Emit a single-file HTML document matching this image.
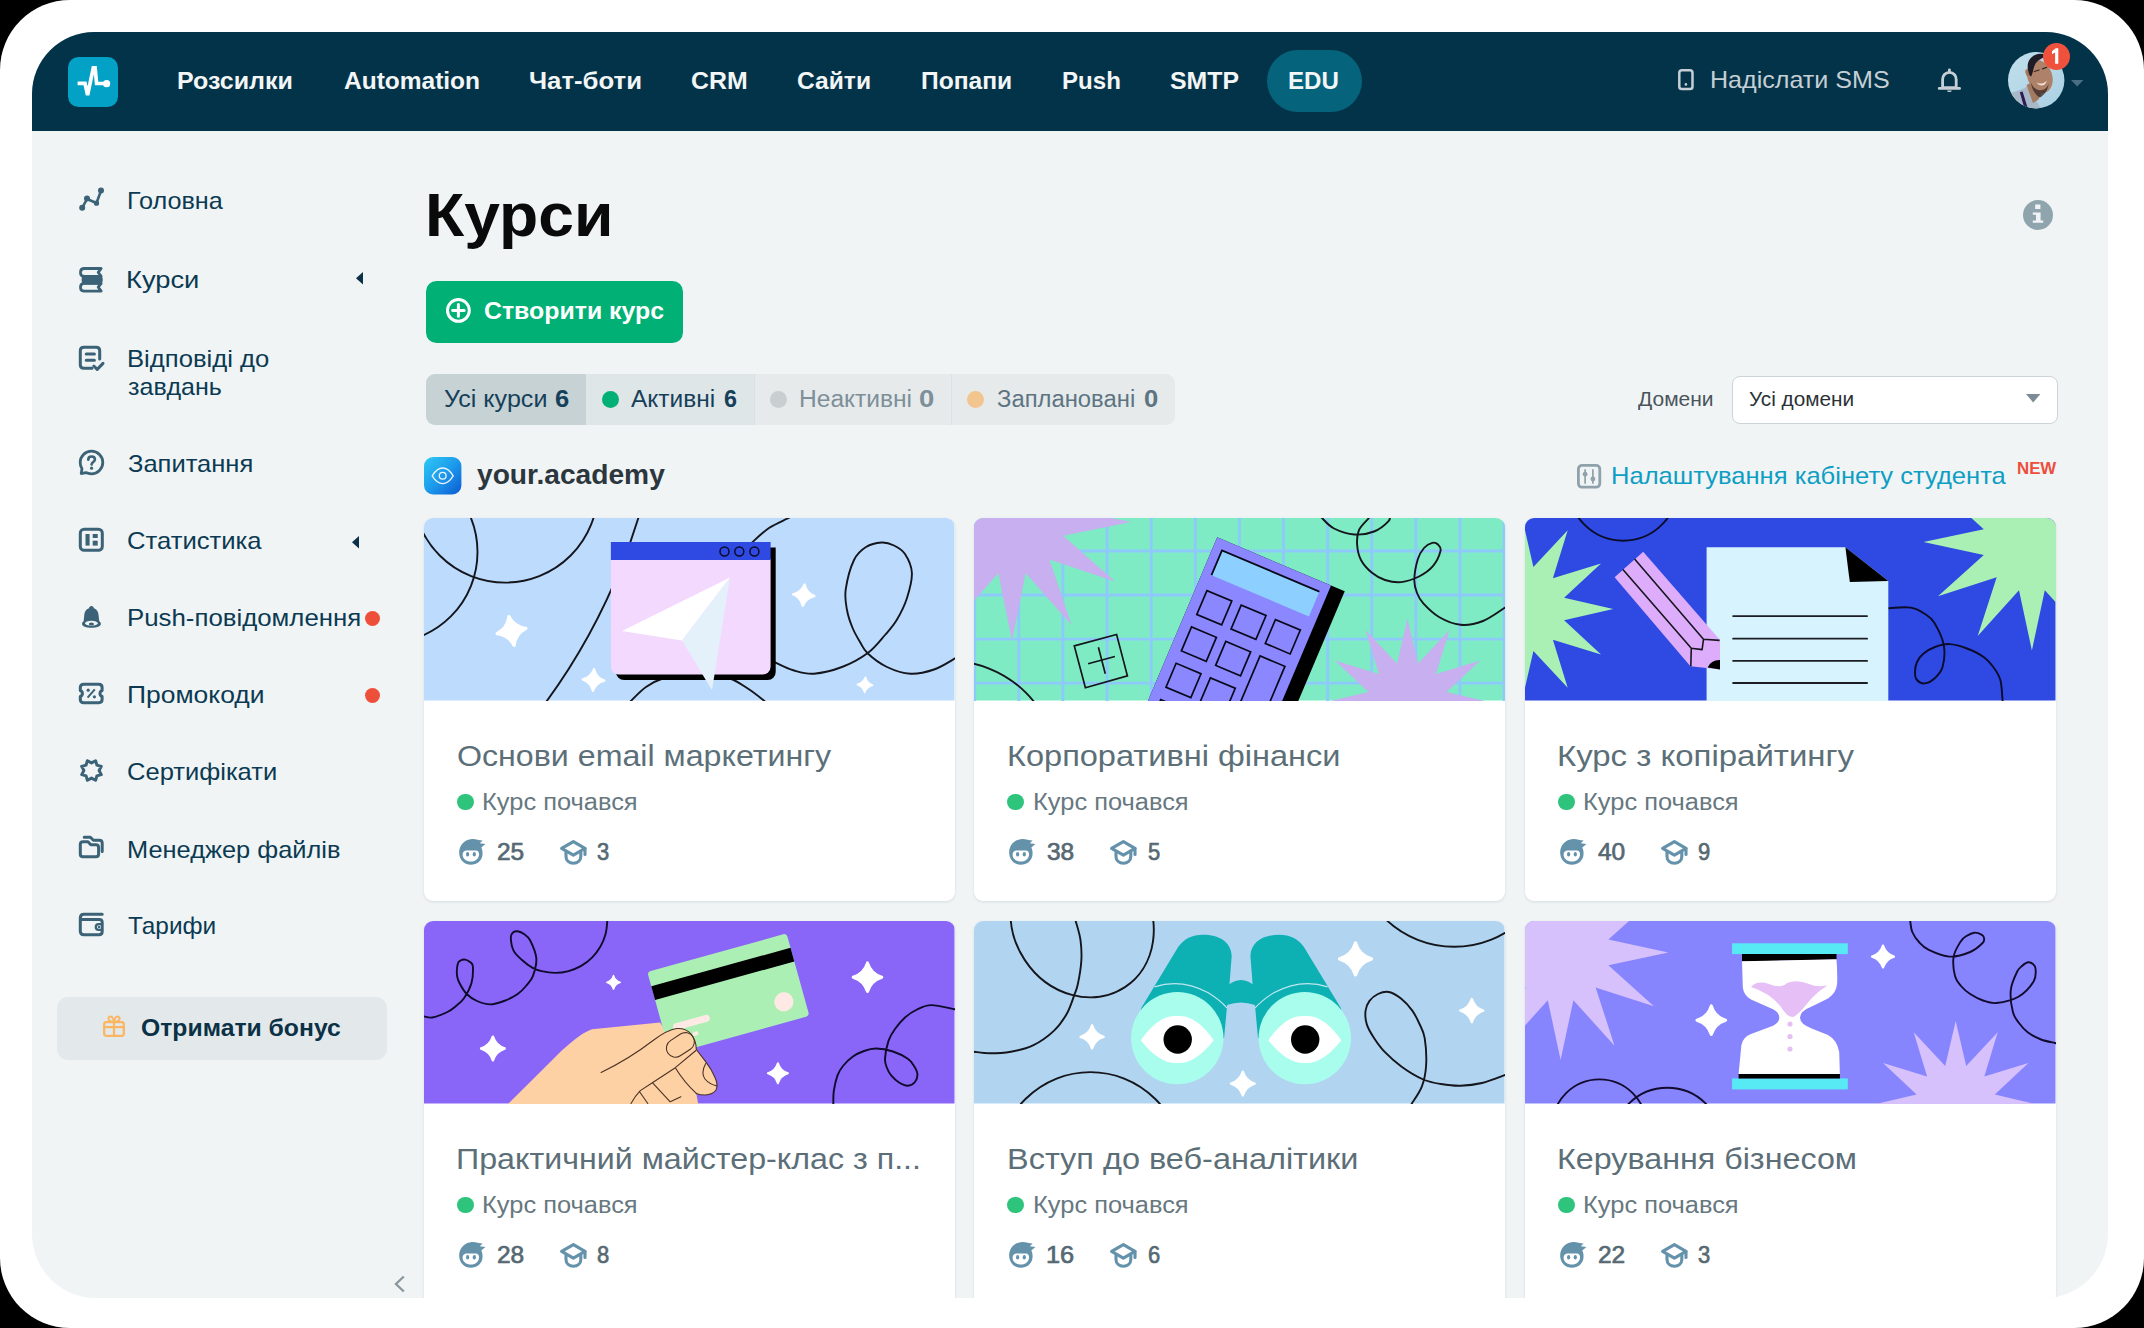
<!DOCTYPE html>
<html lang="uk"><head><meta charset="utf-8"><title>Курси</title><style>
*{margin:0;padding:0;box-sizing:border-box}
html,body{width:2144px;height:1328px;overflow:hidden;background:#000;font-family:"Liberation Sans",sans-serif}
#frame{position:absolute;left:0;top:0;width:2144px;height:1328px;background:#fff;border-radius:70px}
#app{position:absolute;left:32px;top:32px;width:2076px;height:1266px;background:#f0f4f5;border-radius:62px 62px 64px 64px;overflow:hidden}
#abs{position:absolute;left:-32px;top:-32px;width:2144px;height:1328px}
#nav{position:absolute;left:32px;top:32px;width:2076px;height:99px;background:#033348}
.t{position:absolute;white-space:nowrap;line-height:1;transform-origin:0 50%}
.card{position:absolute;width:530.5px;background:#fff;border-radius:9px;overflow:hidden;box-shadow:0 1px 3px rgba(40,60,70,.13)}
.il{display:block;position:absolute;left:0;top:0;overflow:hidden}
.dot{position:absolute;border-radius:50%}
.abs{position:absolute}
svg{overflow:visible}
</style></head><body>
<div id="frame"></div><div id="app"><div id="abs">
<div id="nav"></div>
<svg class="abs" style="left:68.2px;top:56.9px" width="50" height="50" viewBox="0 0 50 50" ><rect width="50" height="50" rx="10.5" fill="#02a1c5"/><path d="M9.6 26.3H17L19.6 38.2L25.3 10.8H27.1L28.6 26.5H36" fill="none" stroke="#fff" stroke-width="3.7" stroke-linejoin="miter" stroke-miterlimit="2"/><circle cx="38.6" cy="26.7" r="3.6" fill="#fff"/></svg>
<div class="abs" style="left:1267px;top:50px;width:95px;height:62px;border-radius:31px;background:#05637c"></div>
<svg class="abs" style="left:1677.8px;top:68.6px" width="16" height="22" viewBox="0 0 16 22" ><rect x="1.3" y="1.3" width="13.2" height="18.8" rx="2.6" fill="none" stroke="#c5cfd5" stroke-width="2.5"/><circle cx="7.9" cy="15.4" r="1.3" fill="#c5cfd5"/></svg>
<svg class="abs" style="left:1937.9px;top:68.6px" width="23" height="25" viewBox="0 0 23 25" ><path d="M11.4 3.4C7.2 3.4 4.6 6.6 4.6 10.6V18.6H18.2V10.6C18.2 6.6 15.6 3.4 11.4 3.4ZM1.2 19.4H21.6" fill="none" stroke="#c5cfd5" stroke-width="2.8" stroke-linecap="round" stroke-linejoin="round"/><path d="M11.4 0.8V3" stroke="#c5cfd5" stroke-width="2.8" stroke-linecap="round"/><path d="M9 21.4C9.4 23.4 13.4 23.4 13.8 21.4Z" fill="#c5cfd5"/></svg>
<svg class="abs" style="left:2008.4px;top:51.9px" width="57" height="57" viewBox="0 0 57 57" ><defs><clipPath id="av"><circle cx="28.2" cy="28.2" r="28.2"/></clipPath><linearGradient id="avg" x1="0" y1="0" x2="1" y2="1"><stop offset="0" stop-color="#c2dfec"/><stop offset="1" stop-color="#a9d0e3"/></linearGradient></defs><g clip-path="url(#av)"><rect width="57" height="57" fill="url(#avg)"/><path d="M0 42C6 39 12 39.5 18.7 34.5L28 48L33 57H2Z" fill="#a9b8c6"/><path d="M11.8 40.2L14.6 39.6L20 57H16.6Z" fill="#2b1c58"/><path d="M18.5 33L26 29L33 42L30.5 47.5L25 51Z" fill="#a17a60"/><ellipse cx="31.8" cy="24.5" rx="12.3" ry="17" transform="rotate(-20 31.8 24.5)" fill="#ad8268"/><ellipse cx="19.6" cy="20.8" rx="2.1" ry="3.6" transform="rotate(-15 19.6 20.8)" fill="#a87657"/><path d="M20.3 19C18.4 12 21 5.5 27 3C31 1.2 36 1.6 38.5 3.8C35 6 30.5 7.5 27.5 11.5C25.6 14.5 25.4 19.5 23.2 24.5C21.4 23.8 20.8 21.5 20.3 19Z" fill="#1d1c27"/><path d="M22.6 30C25 36.5 30.5 40 36.5 37.2C38.8 36 40 33.5 40.6 31.5C40.4 37 36.6 43 32 45.6C27.4 43.5 23.8 37 22.6 30Z" fill="#3b2926" opacity=".78"/><path d="M28.6 30.2C31.6 32.6 36.4 31.8 38.8 28.4C38 33.8 31.6 35.6 28.6 30.2Z" fill="#f1e2da"/><path d="M26.5 19.5L31 18M34.5 16.8L38.5 15.4" stroke="#3a2a26" stroke-width="1.3" stroke-linecap="round"/></g></svg>
<div class="dot" style="left:2042.9px;top:43.3px;width:27.2px;height:27.2px;background:#f0513c"></div><svg class="abs" style="left:2051.0px;top:47.0px" width="9" height="18" viewBox="0 0 9 18" ><path d="M7.3 1.3V16.8H4.1V5.6L1 7.3V4.2L4.7 1.3Z" fill="#fff"/></svg>
<svg class="abs" style="left:2070.8px;top:80.1px" width="12.4" height="6.4" viewBox="0 0 12.4 6.4" ><path d="M0 0H12.4L6.2 6.4Z" fill="#4a6e84"/></svg>
<svg class="abs" style="left:79.0px;top:187.2px" width="26" height="25" viewBox="0 0 26 25" ><path d="M3.2 20.8L8 12L17.5 16L22 3.8" fill="none" stroke="#3b6277" stroke-width="2.6" stroke-linejoin="round"/><circle cx="3.2" cy="20.8" r="3" fill="#3b6277"/><circle cx="8" cy="11.5" r="3" fill="#3b6277"/><circle cx="17.5" cy="16.2" r="2.6" fill="#3b6277"/><circle cx="22" cy="3.6" r="3" fill="#3b6277"/></svg>
<svg class="abs" style="left:79.2px;top:267.4px" width="25" height="26" viewBox="0 0 25 26" ><path d="M22.2 1.5H5.4C2.8 1.5 1.5 3.2 1.5 5.4C1.5 7.6 2.8 9.3 5.4 9.3H22.2L19.2 5.4Z" fill="none" stroke="#3b6277" stroke-width="2.8" stroke-linejoin="round"/><path d="M5.6 8.2H19.6C22.6 8.2 23.8 10.2 23.8 12.8C23.8 15.4 22.6 17.4 19.6 17.4H5.6C3.4 17.4 2.6 15.4 2.6 12.8C2.6 10.2 3.4 8.2 5.6 8.2Z" fill="#3b6277"/><path d="M22.2 16.3H5.4C2.8 16.3 1.5 18 1.5 20.2C1.5 22.4 2.8 24.1 5.4 24.1H22.2L19.2 20.2Z" fill="none" stroke="#3b6277" stroke-width="2.8" stroke-linejoin="round"/></svg>
<svg class="abs" style="left:79.0px;top:345.8px" width="26" height="26" viewBox="0 0 26 26" ><path d="M13 22.3H4.8C2.6 22.3 1.3 21 1.3 18.8V4.8C1.3 2.6 2.6 1.3 4.8 1.3H17.2C19.4 1.3 20.7 2.6 20.7 4.8V13" fill="none" stroke="#3b6277" stroke-width="3" stroke-linecap="round" stroke-linejoin="round"/><path d="M7.2 8H15.4M7.2 14.2H15.4" fill="none" stroke="#3b6277" stroke-width="3" stroke-linecap="round" stroke-linejoin="round"/><path d="M14.8 20L18.2 23.4L24 17.4" fill="none" stroke="#3b6277" stroke-width="3" stroke-linecap="round" stroke-linejoin="round"/></svg>
<svg class="abs" style="left:79.2px;top:450.0px" width="25" height="25" viewBox="0 0 27 27" ><path d="M3.2 20.2C1.9 18.3 1.3 16 1.3 13.5C1.3 6.8 6.8 1.3 13.5 1.3C20.2 1.3 25.7 6.8 25.7 13.5C25.7 20.2 20.2 25.7 13.5 25.7C11 25.7 9 25.2 7.4 24.4L2.4 25.4Z" fill="none" stroke="#3b6277" stroke-width="3" stroke-linecap="round" stroke-linejoin="round"/><path d="M10 10.4C10 8.4 11.5 7 13.6 7C15.7 7 17.2 8.3 17.2 10.2C17.2 12.8 13.6 13 13.6 15.6" fill="none" stroke="#3b6277" stroke-width="2.8" stroke-linecap="round"/><circle cx="13.6" cy="19.6" r="1.7" fill="#3b6277"/></svg>
<svg class="abs" style="left:79.3px;top:527.9px" width="25" height="24" viewBox="0 0 25 24" ><rect x="1.3" y="1.3" width="22" height="21" rx="3.8" fill="none" stroke="#3b6277" stroke-width="3" stroke-linecap="round" stroke-linejoin="round"/><rect x="6.5" y="6" width="4.1" height="11.6" fill="#3b6277"/><rect x="13.7" y="6" width="5" height="4" fill="#3b6277"/><rect x="13.7" y="12.7" width="5" height="4.9" fill="#3b6277"/></svg>
<svg class="abs" style="left:82.3px;top:605.9px" width="19" height="22" viewBox="0 0 19 22" ><path d="M9.4 0C10.8 0 11.9 1 11.9 2.3C15 3.4 16.4 6.2 16.6 9.4L17.2 15C18.4 16 18.9 17 18.9 18C18.9 20.4 14.6 21.8 9.4 21.8C4.2 21.8 0 20.4 0 18C0 17 0.5 16 1.7 15L2.2 9.4C2.4 6.2 3.8 3.4 7 2.3C7 1 8 0 9.4 0Z" fill="#3b6277"/><ellipse cx="9.4" cy="17.3" rx="6.3" ry="2.5" fill="#f0f4f5"/><ellipse cx="9.4" cy="17.9" rx="2.6" ry="1.5" fill="#3b6277"/></svg>
<svg class="abs" style="left:79.3px;top:683.0px" width="25" height="21" viewBox="0 0 25 21" ><path d="M4.6 1.3H19.8C21.9 1.3 23.1 2.5 23.1 4.4V7.5C21.6 8 21 9.2 21 10.5C21 11.8 21.6 13 23.1 13.5V16.6C23.1 18.5 21.9 19.7 19.8 19.7H4.6C2.5 19.7 1.3 18.5 1.3 16.6V13.5C2.8 13 3.4 11.8 3.4 10.5C3.4 9.2 2.8 8 1.3 7.5V4.4C1.3 2.5 2.5 1.3 4.6 1.3Z" fill="none" stroke="#3b6277" stroke-width="3" stroke-linecap="round" stroke-linejoin="round"/><path d="M8.6 14.6L15.8 6.4" fill="none" stroke="#3b6277" stroke-width="2"/><circle cx="9.2" cy="7.2" r="1.6" fill="#3b6277"/><circle cx="15.4" cy="13.8" r="1.6" fill="#3b6277"/></svg>
<svg class="abs" style="left:79.2px;top:758.0px" width="25" height="25" viewBox="0 0 25 25" ><polygon points="16.6,2.7 17.9,7.1 22.3,8.4 20.1,12.5 22.3,16.6 17.9,17.9 16.6,22.3 12.5,20.1 8.4,22.3 7.1,17.9 2.7,16.6 4.9,12.5 2.7,8.4 7.1,7.1 8.4,2.7 12.5,4.9" fill="none" stroke="#3b6277" stroke-width="3" stroke-linecap="round" stroke-linejoin="round"/></svg>
<svg class="abs" style="left:79.3px;top:836.2px" width="25" height="23" viewBox="0 0 25 23" ><path d="M1.3 8.6C1.3 6.8 2.4 5.8 4 5.8H9L11.8 8.8H16.8C18.6 8.8 19.6 9.8 19.6 11.6V18C19.6 19.8 18.6 20.8 16.8 20.8H4C2.4 20.8 1.3 19.8 1.3 18Z" fill="none" stroke="#3b6277" stroke-width="3" stroke-linecap="round" stroke-linejoin="round"/><path d="M5.2 1.3H11.4L14.4 4.3H20.2C22 4.3 23.2 5.4 23.2 7.2V15.6" fill="none" stroke="#3b6277" stroke-width="3" stroke-linecap="round" stroke-linejoin="round"/></svg>
<svg class="abs" style="left:79.3px;top:913.4px" width="25" height="23" viewBox="0 0 25 23" ><path d="M23.2 1.3H5C2.6 1.3 1.3 2.8 1.3 5V18.2C1.3 20.4 2.6 21.8 5 21.8H20C22 21.8 23.2 20.6 23.2 18.6V9.4C23.2 7.6 22 6.6 20.2 6.6H2" fill="none" stroke="#3b6277" stroke-width="3" stroke-linecap="round" stroke-linejoin="round"/><path d="M23 11.2H19.6C17.8 11.2 16.8 12.4 16.8 14C16.8 15.6 17.8 16.8 19.6 16.8H23" fill="none" stroke="#3b6277" stroke-width="2.3"/><circle cx="20" cy="14" r="1.2" fill="#3b6277"/></svg>
<svg class="abs" style="left:356.4px;top:272.2px" width="7" height="12.4" viewBox="0 0 7 12.4" ><path d="M7 0V12.4L0 6.2Z" fill="#0b3147"/></svg>
<svg class="abs" style="left:352.3px;top:536.0px" width="7" height="12.4" viewBox="0 0 7 12.4" ><path d="M7 0V12.4L0 6.2Z" fill="#0b3147"/></svg>
<div class="dot" style="left:365.4px;top:610.7px;width:15px;height:15px;background:#ee4f3b"></div><div class="dot" style="left:365.4px;top:687.7px;width:15px;height:15px;background:#ee4f3b"></div><div class="abs" style="left:56.5px;top:996.5px;width:330.5px;height:63px;border-radius:11px;background:#e3e9ea"></div>
<svg class="abs" style="left:103.4px;top:1014.8px" width="22" height="22" viewBox="0 0 22 22" ><rect x="1.2" y="7.2" width="19.6" height="13.6" rx="2" fill="none" stroke="#fbb663" stroke-width="2.3"/><path d="M11 7V21M1.2 12.2H20.8" stroke="#fbb663" stroke-width="2.3" fill="none"/><path d="M11 6.6C8 6.6 5.4 5.6 5.4 3.4C5.4 1.6 7.4 0.8 8.8 2C10 3 10.8 5 11 6.6C11.2 5 12 3 13.2 2C14.6 0.8 16.6 1.6 16.6 3.4C16.6 5.6 14 6.6 11 6.6Z" fill="none" stroke="#fbb663" stroke-width="2" stroke-linejoin="round"/></svg>
<svg class="abs" style="left:394.0px;top:1275.0px" width="11" height="18" viewBox="0 0 11 18" ><path d="M9.8 1.5L2 9L9.8 16.5" fill="none" stroke="#8b989e" stroke-width="2.4"/></svg>
<svg class="abs" style="left:2022.9px;top:199.7px" width="30" height="30" viewBox="0 0 30 30" ><circle cx="15" cy="15" r="15" fill="#90a4ad"/><path d="M12.2 4.6H17.4V9H12.2ZM9.8 12.4H17.6V20.4H20.2V22.8H9.8V20.4H13V14.8H9.8Z" fill="#f0f4f5"/></svg>
<div class="abs" style="left:426px;top:281px;width:257px;height:62px;border-radius:10.5px;background:#00b075"></div>
<svg class="abs" style="left:446.3px;top:297.8px" width="24.8" height="24.8" viewBox="0 0 24.8 24.8" ><circle cx="12.4" cy="12.4" r="10.9" fill="none" stroke="#fff" stroke-width="3"/><path d="M6.6 12.4H18.2M12.4 6.6V18.2" stroke="#fff" stroke-width="3" stroke-linecap="round"/></svg>
<div class="abs" style="left:426px;top:374px;width:749px;height:50.8px;border-radius:9px;background:#e6eaeb;overflow:hidden"><div class="abs" style="left:0;top:0;width:160px;height:52px;background:#c6d2d4"></div><div class="abs" style="left:160px;top:0;width:168px;height:52px;background:#dfe6e7"></div><div class="abs" style="left:327.5px;top:0;width:1.2px;height:52px;background:#d9e0e1"></div><div class="abs" style="left:524.5px;top:0;width:1.2px;height:52px;background:#dce2e3"></div></div>
<div class="dot" style="left:601.5px;top:390.7px;width:17.2px;height:17.2px;background:#00b075"></div><div class="dot" style="left:770.1px;top:390.7px;width:17.2px;height:17.2px;background:#c9ced1"></div><div class="dot" style="left:967.1px;top:390.7px;width:17.2px;height:17.2px;background:#f2c48e"></div><svg class="abs" style="left:423.9px;top:457.1px" width="37.4" height="37.4" viewBox="0 0 37.4 37.4" ><defs><linearGradient id="ag" x1="0" y1="0" x2="1" y2="1"><stop offset="0" stop-color="#2fc9f5"/><stop offset=".5" stop-color="#1c9bec"/><stop offset="1" stop-color="#0c5ad2"/></linearGradient></defs><rect width="37.4" height="37.4" rx="9" fill="url(#ag)"/><path d="M8.2 18.8Q13 11 18.7 11Q24.4 11 29.2 18.8Q24.4 26.6 18.7 26.6Q13 26.6 8.2 18.8Z" fill="none" stroke="#eef4ff" stroke-width="1.3"/><circle cx="18.7" cy="18.8" r="3.4" fill="none" stroke="#eef4ff" stroke-width="1.3"/></svg>
<div class="abs" style="left:1732px;top:376px;width:326px;height:47.5px;border-radius:8px;background:#fff;border:1.5px solid #ccd4d7"></div>
<svg class="abs" style="left:2026.3px;top:393.7px" width="14.4" height="8.4" viewBox="0 0 14.4 8.4" ><path d="M0 0H14.4L7.2 8.4Z" fill="#7d8c94"/></svg>
<svg class="abs" style="left:1576.9px;top:464.1px" width="24.2" height="24.6" viewBox="0 0 24.2 24.6" ><rect x="1.4" y="1.4" width="21.4" height="21.8" rx="3.6" fill="none" stroke="#8fa1aa" stroke-width="2.8"/><path d="M8.1 5.2V19.8M15.9 5.2V19.8" stroke="#8fa1aa" stroke-width="1.7"/><circle cx="8.1" cy="10.2" r="2.4" fill="#8fa1aa"/><circle cx="15.9" cy="15" r="2.4" fill="#8fa1aa"/></svg>
<div class="card" style="left:424.0px;top:518.3px;height:383.2px"><svg class="il" viewBox="0 0 530.5 182.5" width="530.5" height="182.5" preserveAspectRatio="none"><rect width="530.5" height="182.5" fill="#bcdbfd"/><circle cx="81.2" cy="-28" r="92.6" fill="none" stroke="#15151c" stroke-width="1.9" stroke-linecap="round"/><circle cx="-37.6" cy="34" r="91.1" fill="none" stroke="#15151c" stroke-width="1.9" stroke-linecap="round"/><circle cx="-379.4" cy="-182.8" r="621.2" fill="none" stroke="#15151c" stroke-width="1.9" stroke-linecap="round"/><path fill="none" stroke="#15151c" stroke-width="1.9" stroke-linecap="round" d="M205 186C205.3 185.5 204.2 185.8 207 183C209.8 180.2 216.5 172.8 222 169C227.5 165.2 231.5 162.7 240 160C248.5 157.3 262.2 153 273 153C283.8 153 296.3 157.2 304.6 160C312.9 162.8 317 166.2 323 170C329 173.8 337.1 180.3 340.4 183C343.7 185.7 342.6 185.5 343 186"/><path fill="none" stroke="#15151c" stroke-width="1.9" stroke-linecap="round" d="M366 -2C365.8 -1.7 368 -2 364.5 0C361 2 351 6 345 10C339 14 332.9 20 328.7 24C324.5 28 321.4 32.3 320 34"/><path fill="none" stroke="#15151c" stroke-width="1.9" stroke-linecap="round" d="M345 140C346.1 140.8 347.5 142.6 351.7 144.7C355.9 146.8 363.6 150.7 370 152.5C376.4 154.3 382 156.3 390 155.7C398 155.1 409 152.4 418 149C427 145.6 436.6 140.3 443.8 135C451 129.7 456.2 122.5 461 117C465.8 111.5 469 108.2 472.7 102C476.4 95.8 480.5 87.8 483 80C485.5 72.2 488.2 62.3 487.9 55C487.6 47.7 484 40.6 481 36C478 31.4 473.9 29.4 470 27.5C466.1 25.6 462.3 24.2 457.6 24.5C452.9 24.8 446.6 26.1 442 29C437.4 31.9 433.4 34.9 430 42C426.6 49.1 422.9 63.4 421.7 71.7C420.5 80 421.9 85.6 423 92C424.1 98.4 426.4 104.7 428.6 110C430.8 115.3 433.5 119.8 436 124C438.5 128.2 439.3 131.3 443.8 135.5C448.3 139.7 455.9 145.6 463 149C470.1 152.4 478.7 155.3 486.5 155.7C494.3 156.1 502.6 154 510 151.5C517.4 149 526.4 143 530.6 140.6C534.8 138.2 534.3 137.6 535 137"/><path d="M192 29.6H351.7V154a8 8 0 0 1-8 8H200a8 8 0 0 1-8-8Z" fill="#000"/><path d="M186.9 41H346.6V148.5a8 8 0 0 1-8 8H194.9a8 8 0 0 1-8-8Z" fill="#f3d9fd"/><rect x="186.9" y="24" width="159.7" height="18" fill="#2f49e3"/><circle cx="300.5" cy="33.5" r="4.5" fill="none" stroke="#0b0b2a" stroke-width="1.5"/><circle cx="315.3" cy="33.5" r="4.5" fill="none" stroke="#0b0b2a" stroke-width="1.5"/><circle cx="330.4" cy="33.5" r="4.5" fill="none" stroke="#0b0b2a" stroke-width="1.5"/><polygon points="306,59.5 198,113 258,122.4" fill="#fff"/><polygon points="306,59.5 258,122.4 288,172.3" fill="#e4f0fa"/><path d="M84.9 98.5Q90.3 109.0 102.0 110.4Q91.5 115.8 90.1 127.5Q84.7 117.0 73.0 115.6Q83.5 110.2 84.9 98.5Z" fill="#fff" stroke="#fff" stroke-width="3.1" stroke-linejoin="round"/><path d="M170.1 151.2Q172.2 159.6 180.3 162.6Q171.9 164.7 168.9 172.8Q166.8 164.4 158.7 161.4Q167.1 159.3 170.1 151.2Z" fill="#fff" stroke="#fff" stroke-width="2.3" stroke-linejoin="round"/><path d="M380.6 66.5Q382.4 74.9 390.4 78.1Q382.0 79.9 378.8 87.9Q377.0 79.5 369.0 76.3Q377.4 74.5 380.6 66.5Z" fill="#fff" stroke="#fff" stroke-width="2.3" stroke-linejoin="round"/><path d="M441.4 159.2Q442.9 165.1 448.6 167.2Q442.7 168.7 440.6 174.4Q439.1 168.5 433.4 166.4Q439.3 164.9 441.4 159.2Z" fill="#fff" stroke="#fff" stroke-width="1.6" stroke-linejoin="round"/></svg></div>
<div class="dot" style="left:457.0px;top:793.7px;width:16.8px;height:16.8px;background:#2fc47c"></div>
<svg class="abs" style="left:458.5px;top:839.4px" width="26.5" height="26" viewBox="0 0 26.5 26" ><path d="M11.8 0.2C16 -0.4 19.5 1.2 23.6 1.6L20.8 4.2L26.4 5.1L22.3 8.6C23.6 11 23.8 14 23.4 16.5C22.5 22 17.8 25.8 12 25.8C5.5 25.8 0.6 21 0.2 14.5C-0.2 7 4.5 1.2 11.8 0.2Z" fill="#6492ab"/><path d="M3.6 15.2C3.8 13.2 5 11.7 7 11.5C9.8 11.3 14.5 11.5 17 11.6C19 11.7 20.1 13.3 20.1 15.2C20 19.4 16.4 22.6 12 22.6C7.4 22.6 3.3 19.4 3.6 15.2Z" fill="#fff"/><ellipse cx="8.6" cy="15.2" rx="1.6" ry="2.2" fill="#6492ab"/><ellipse cx="15.3" cy="15.2" rx="1.6" ry="2.2" fill="#6492ab"/></svg>

<svg class="abs" style="left:559.7px;top:840.1px" width="27" height="25" viewBox="0 0 27 25" ><path d="M13.4 1.6L1.6 8.4L13.4 15.2L25 8.4Z" fill="none" stroke="#6492ab" stroke-width="3.1" stroke-linejoin="round"/><path d="M6 11.8V16.6C6 20.6 9.3 23.2 13.4 23.2C17.5 23.2 20.8 20.6 20.8 16.6V11.8" fill="none" stroke="#6492ab" stroke-width="3.1"/><path d="M25 8.6V14.4" fill="none" stroke="#6492ab" stroke-width="3.1" stroke-linecap="round"/></svg>

<div class="card" style="left:974.4px;top:518.3px;height:383.2px"><svg class="il" viewBox="0 0 530.5 182.5" width="530.5" height="182.5" preserveAspectRatio="none"><rect width="530.5" height="182.5" fill="#7eebc4"/><path d="M0.7 0V183M44.8 0V183M88.9 0V183M133.1 0V183M177.2 0V183M221.3 0V183M265.4 0V183M309.5 0V183M353.7 0V183M397.8 0V183M441.9 0V183M486.0 0V183M530.1 0V183M0 33.0H531M0 77.0H531M0 121.1H531M0 165.1H531M0 209.2H531" stroke="#8dcafb" stroke-width="2.9" fill="none"/><polygon points="157.0,4.0 89.2,17.7 141.1,63.5 75.5,41.5 97.5,107.1 51.7,55.2 38.0,123.0 24.3,55.2 -21.5,107.1 0.5,41.5 -65.1,63.5 -13.2,17.7 -81.0,4.0 -13.2,-9.7 -65.1,-55.5 0.5,-33.5 -21.5,-99.1 24.3,-47.2 38.0,-115.0 51.7,-47.2 97.5,-99.1 75.5,-33.5 141.1,-55.5 89.2,-9.7" fill="#c8aff0"/><polygon points="517.5,184.6 472.6,195.1 506.2,226.6 462.1,213.2 475.5,257.3 444.0,223.7 433.5,268.6 423.0,223.7 391.5,257.3 404.9,213.2 360.8,226.6 394.4,195.1 349.5,184.6 394.4,174.1 360.8,142.6 404.9,156.0 391.5,111.9 423.0,145.5 433.5,100.6 444.0,145.5 475.5,111.9 462.1,156.0 506.2,142.6 472.6,174.1" fill="#c8aff0"/><circle cx="-24.8" cy="251.3" r="108.4" fill="none" stroke="#15151c" stroke-width="1.9" stroke-linecap="round"/><path fill="none" stroke="#15151c" stroke-width="1.7" stroke-linejoin="miter" d="M100.3 127.9L142.6 116.5L153.4 157.8L111.4 169.8ZM124.4 129.3L131.3 155.7M114.1 145.8L140.9 138.5"/><path fill="none" stroke="#15151c" stroke-width="1.9" stroke-linecap="round" d="M346 -3C346.3 -2.5 345.7 -2.2 348 0C350.3 2.2 354.6 7.8 360 10.5C365.4 13.2 373.7 16 380.4 16.5C387.1 17 394.3 15.8 400 13.5C405.7 11.2 412.3 5.5 414.8 2.8C417.3 0 415 -2 415 -3"/><path fill="none" stroke="#15151c" stroke-width="1.9" stroke-linecap="round" d="M397 -3C396.6 -2.5 396.9 -2.5 394.9 0C392.9 2.5 387 7.6 385 12C383 16.4 382.8 21.2 383.1 26.2C383.4 31.2 384.5 37.2 387 42C389.5 46.8 394.3 51.8 398.3 55.1C402.3 58.4 406.2 60.5 411 62C415.8 63.5 421.5 64.7 427.2 64.1C432.9 63.5 439.7 61.1 445 58.5C450.3 55.9 455.3 52.4 458.9 48.2C462.5 44 465.6 36.7 466.5 33.1C467.4 29.5 465.4 27.9 464 26.5C462.6 25.1 460.6 24.2 458.3 24.8C456 25.4 452.4 27.2 450 30C447.6 32.8 445.4 36 443.8 41.3C442.2 46.6 440.4 56.4 440.3 62C440.2 67.6 441.5 71.1 443 75C444.5 78.9 445.6 81.4 449.3 85.4C453 89.4 458.8 95.4 465 99C471.2 102.6 479.2 106.1 486.5 106.8C493.8 107.5 501.8 105.8 509 103C516.2 100.2 525.7 93 529.9 90.3C534.1 87.6 533.3 87.5 534 87"/><g transform="translate(243.2 19.3) rotate(22.95)"><rect x="0" y="0" width="138.5" height="220" fill="#000"/><rect x="0" y="0" width="123.6" height="220" fill="#8a87ff"/><rect x="9.5" y="10.2" width="105.8" height="26.9" fill="#8dcfff"/><path d="M9.5 37.1V10.2H115.3" fill="none" stroke="#0a0a1a" stroke-width="1.8"/><rect x="11.3" y="53.0" width="27" height="26.0" fill="none" stroke="#0a0a1a" stroke-width="1.7"/><rect x="11.3" y="92.5" width="27" height="26.0" fill="none" stroke="#0a0a1a" stroke-width="1.7"/><rect x="11.3" y="132.0" width="27" height="26.0" fill="none" stroke="#0a0a1a" stroke-width="1.7"/><rect x="11.3" y="171.5" width="27" height="26.0" fill="none" stroke="#0a0a1a" stroke-width="1.7"/><rect x="48.5" y="53.0" width="27" height="26.0" fill="none" stroke="#0a0a1a" stroke-width="1.7"/><rect x="48.5" y="92.5" width="27" height="26.0" fill="none" stroke="#0a0a1a" stroke-width="1.7"/><rect x="48.5" y="132.0" width="27" height="26.0" fill="none" stroke="#0a0a1a" stroke-width="1.7"/><rect x="48.5" y="171.5" width="27" height="26.0" fill="none" stroke="#0a0a1a" stroke-width="1.7"/><rect x="85.7" y="53.0" width="27" height="26.0" fill="none" stroke="#0a0a1a" stroke-width="1.7"/><rect x="85.7" y="92.5" width="27" height="105.0" fill="none" stroke="#0a0a1a" stroke-width="1.7"/><rect x="85.7" y="171.5" width="27" height="26.0" fill="none" stroke="#0a0a1a" stroke-width="1.7"/></g></svg></div>
<div class="dot" style="left:1007.4px;top:793.7px;width:16.8px;height:16.8px;background:#2fc47c"></div>
<svg class="abs" style="left:1008.9px;top:839.4px" width="26.5" height="26" viewBox="0 0 26.5 26" ><path d="M11.8 0.2C16 -0.4 19.5 1.2 23.6 1.6L20.8 4.2L26.4 5.1L22.3 8.6C23.6 11 23.8 14 23.4 16.5C22.5 22 17.8 25.8 12 25.8C5.5 25.8 0.6 21 0.2 14.5C-0.2 7 4.5 1.2 11.8 0.2Z" fill="#6492ab"/><path d="M3.6 15.2C3.8 13.2 5 11.7 7 11.5C9.8 11.3 14.5 11.5 17 11.6C19 11.7 20.1 13.3 20.1 15.2C20 19.4 16.4 22.6 12 22.6C7.4 22.6 3.3 19.4 3.6 15.2Z" fill="#fff"/><ellipse cx="8.6" cy="15.2" rx="1.6" ry="2.2" fill="#6492ab"/><ellipse cx="15.3" cy="15.2" rx="1.6" ry="2.2" fill="#6492ab"/></svg>

<svg class="abs" style="left:1110.1px;top:840.1px" width="27" height="25" viewBox="0 0 27 25" ><path d="M13.4 1.6L1.6 8.4L13.4 15.2L25 8.4Z" fill="none" stroke="#6492ab" stroke-width="3.1" stroke-linejoin="round"/><path d="M6 11.8V16.6C6 20.6 9.3 23.2 13.4 23.2C17.5 23.2 20.8 20.6 20.8 16.6V11.8" fill="none" stroke="#6492ab" stroke-width="3.1"/><path d="M25 8.6V14.4" fill="none" stroke="#6492ab" stroke-width="3.1" stroke-linecap="round"/></svg>

<div class="card" style="left:1525.0px;top:518.3px;height:383.2px"><svg class="il" viewBox="0 0 530.5 182.5" width="530.5" height="182.5" preserveAspectRatio="none"><rect width="530.5" height="182.5" fill="#2e4ae2"/><polygon points="88.2,91.0 39.1,102.2 76.0,136.5 27.9,121.7 42.7,169.8 8.4,132.9 -2.8,182.0 -14.0,132.9 -48.3,169.8 -33.5,121.7 -81.6,136.5 -44.7,102.2 -93.8,91.0 -44.7,79.8 -81.6,45.5 -33.5,60.3 -48.3,12.2 -14.0,49.1 -2.8,0.0 8.4,49.1 42.7,12.2 27.9,60.3 76.0,45.5 39.1,79.8" fill="#aaf0b4"/><polygon points="615.3,24.1 555.0,37.0 600.8,78.3 542.1,59.3 561.1,118.0 519.8,72.2 506.9,132.5 494.0,72.2 452.7,118.0 471.7,59.3 413.0,78.3 458.8,37.0 398.5,24.1 458.8,11.2 413.0,-30.1 471.7,-11.1 452.7,-69.8 494.0,-24.0 506.9,-84.3 519.8,-24.0 561.1,-69.8 542.1,-11.1 600.8,-30.1 555.0,11.2" fill="#aaf0b4"/><circle cx="98.2" cy="-32.1" r="54.8" fill="none" stroke="#0b0b2a" stroke-width="1.9" stroke-linecap="round"/><path fill="none" stroke="#0b0b2a" stroke-width="1.9" stroke-linecap="round" d="M355 92C356.4 91.7 358.2 90.7 363.3 90.3C368.4 89.9 379.8 88.6 385.9 89.6C392 90.5 396.1 93.5 400 96C403.9 98.5 406.2 99.6 409.3 104.7C412.4 109.8 417.3 119.4 418.7 126.8C420.1 134.2 419.1 143.3 417.6 148.8C416.2 154.3 413 157.2 410 160C407 162.8 402.7 165.1 399.7 165.4C396.7 165.7 393.6 163.8 392 162C390.4 160.2 390 157.4 390 154.4C390 151.4 390.6 147.1 392 144C393.4 140.9 395.3 138.2 398.3 135.7C401.3 133.2 405.6 130.6 410 129C414.4 127.4 419.2 125.8 424.5 126.1C429.8 126.3 436.3 128.3 442 130.5C447.7 132.7 454.4 135.9 458.9 139.2C463.4 142.4 466.2 146.1 469 150C471.8 153.9 474.1 157.1 475.5 162.6C476.9 168.1 477.2 179.1 477.6 183C478 186.9 477.6 185.5 477.6 186"/><path d="M181.6 29.2H320.4L363.3 63.1V183H181.6Z" fill="#d7f4fe"/><polygon points="320.4,29.2 363.3,63.1 324.8,64.1" fill="#000"/><path d="M208.1 98.1H342.1M208.1 120.7H342.1M208.1 142.9H342.1M208.1 165H342.1" stroke="#1c1c24" stroke-width="1.8" stroke-linecap="round"/><polygon points="89.6,59.3 118.2,33.8 195,122 195,151.6 165.4,148.2" fill="#ddadfb"/><path d="M109.6 41.1L178.5 121.3L194.6 122.4M97.9 51.4L166.3 130.2L165.8 148.2M166.3 130.2L177.1 131.6L178.5 121.3" fill="none" stroke="#16161e" stroke-width="1.6" stroke-linejoin="round"/><path d="M195 142A12 10 0 0 0 182.6 149.5L195 151.6Z" fill="#000"/></svg></div>
<div class="dot" style="left:1558.0px;top:793.7px;width:16.8px;height:16.8px;background:#2fc47c"></div>
<svg class="abs" style="left:1559.5px;top:839.4px" width="26.5" height="26" viewBox="0 0 26.5 26" ><path d="M11.8 0.2C16 -0.4 19.5 1.2 23.6 1.6L20.8 4.2L26.4 5.1L22.3 8.6C23.6 11 23.8 14 23.4 16.5C22.5 22 17.8 25.8 12 25.8C5.5 25.8 0.6 21 0.2 14.5C-0.2 7 4.5 1.2 11.8 0.2Z" fill="#6492ab"/><path d="M3.6 15.2C3.8 13.2 5 11.7 7 11.5C9.8 11.3 14.5 11.5 17 11.6C19 11.7 20.1 13.3 20.1 15.2C20 19.4 16.4 22.6 12 22.6C7.4 22.6 3.3 19.4 3.6 15.2Z" fill="#fff"/><ellipse cx="8.6" cy="15.2" rx="1.6" ry="2.2" fill="#6492ab"/><ellipse cx="15.3" cy="15.2" rx="1.6" ry="2.2" fill="#6492ab"/></svg>

<svg class="abs" style="left:1660.7px;top:840.1px" width="27" height="25" viewBox="0 0 27 25" ><path d="M13.4 1.6L1.6 8.4L13.4 15.2L25 8.4Z" fill="none" stroke="#6492ab" stroke-width="3.1" stroke-linejoin="round"/><path d="M6 11.8V16.6C6 20.6 9.3 23.2 13.4 23.2C17.5 23.2 20.8 20.6 20.8 16.6V11.8" fill="none" stroke="#6492ab" stroke-width="3.1"/><path d="M25 8.6V14.4" fill="none" stroke="#6492ab" stroke-width="3.1" stroke-linecap="round"/></svg>

<div class="card" style="left:424.0px;top:921.3px;height:400.0px"><svg class="il" viewBox="0 0 530.5 182.5" width="530.5" height="182.5" preserveAspectRatio="none"><rect width="530.5" height="182.5" fill="#8965f8"/><path fill="none" stroke="#0f0b2a" stroke-width="1.9" stroke-linecap="round" d="M183 -5.8C183.1 -4.9 183.6 -3.5 183.3 -0.3C183.1 2.9 182.7 8.8 181.5 13.2C180.3 17.6 178.6 21.9 176.3 25.8C174.1 29.7 171.2 33.4 168 36.6C164.8 39.8 161.1 42.6 157.2 44.9C153.3 47.1 148.9 48.9 144.6 50.1C140.2 51.3 135.6 51.9 131.1 51.9C126.6 51.9 121.4 51 117.6 50.1C113.8 49.2 111.5 48.5 108.2 46.6C104.9 44.8 101.1 41.8 98 39C94.9 36.2 91.5 33.4 89.6 29.6C87.7 25.9 86.9 19.5 86.8 16.5C86.7 13.5 87.8 12.5 89 11.5C90.2 10.5 91.9 10.1 93.7 10.3C95.5 10.6 97.9 11.5 100 13C102.1 14.5 104 15.3 106.1 19.3C108.1 23.3 111.8 31.2 112.3 37.2C112.8 43.2 110.6 50.5 108.9 55.1C107.2 59.7 104.5 62 102 65C99.5 68 97.4 70.5 93.7 73C90 75.5 84.6 78.3 80 80C75.4 81.7 70.7 83.4 66.2 83.4C61.7 83.4 56.9 81.7 53 80C49.1 78.3 45.5 75.8 42.7 73C39.9 70.2 37.6 66 36 63C34.4 60 33.5 58.5 33.1 55.1C32.7 51.7 33.1 45.3 33.8 42.7C34.4 40.1 35.8 40 37 39.3C38.2 38.6 39.8 38.3 41.3 38.6C42.8 38.9 44.7 39.9 46 41C47.3 42.1 48.6 42 48.9 45.5C49.1 49 49 56.7 47.5 62C46 67.3 42.6 73.4 40 77.2C37.4 81 34.8 82.7 32 85C29.2 87.3 27.3 89.1 23.4 91C19.4 92.9 12.2 95.8 8.3 96.5C4.4 97.2 2.1 95.7 0 95.4C-2.1 95.2 -3.3 95.1 -4 95"/><path fill="none" stroke="#0f0b2a" stroke-width="1.9" stroke-linecap="round" d="M534 89C533.4 88.9 535.1 89 530.6 88.2C526.1 87.4 513.5 84 507.2 84.1C500.9 84.1 497.4 86.4 493 88.5C488.6 90.6 484.7 93.2 481 96.5C477.3 99.8 473.8 104.1 471 108C468.2 111.9 466.2 114.9 464.5 119.9C462.8 124.9 461.2 133.3 461 137.8C460.8 142.3 462 144.2 463 147C464 149.8 465.2 152 467.2 154.4C469.2 156.8 472.2 159.8 475 161.5C477.8 163.2 481.1 164.8 483.8 164.7C486.5 164.6 489.4 162.9 491 161C492.6 159.1 493.6 155.7 493.4 153C493.2 150.3 491.6 147.5 490 145C488.4 142.5 487.3 140.2 483.8 137.8C480.3 135.4 474.3 132.2 469 130.5C463.7 128.8 456.9 127.6 452.1 127.5C447.3 127.4 443.9 128.6 440 130C436.1 131.4 432.1 133.2 428.6 135.7C425.1 138.2 421.5 141.9 419 145C416.5 148.1 415 150.2 413.5 154.4C412 158.6 410.5 165.2 409.8 170C409.1 174.8 409.4 180.3 409.3 183C409.2 185.7 409.3 185.5 409.3 186"/><path d="M68.9 115.7Q71.7 124.7 80.7 127.5Q71.7 130.3 68.9 139.3Q66.1 130.3 57.1 127.5Q66.1 124.7 68.9 115.7Z" fill="#fff" stroke="#fff" stroke-width="2.5" stroke-linejoin="round"/><path d="M189.5 54.4Q191.1 59.7 196.4 61.3Q191.1 62.9 189.5 68.2Q187.9 62.9 182.6 61.3Q187.9 59.7 189.5 54.4Z" fill="#fff" stroke="#fff" stroke-width="1.4" stroke-linejoin="round"/><path d="M443.5 41.9Q446.9 52.8 457.8 56.2Q446.9 59.6 443.5 70.5Q440.1 59.6 429.2 56.2Q440.1 52.8 443.5 41.9Z" fill="#fff" stroke="#fff" stroke-width="3.0" stroke-linejoin="round"/><path d="M353.9 142.3Q356.2 150.0 363.9 152.3Q356.2 154.6 353.9 162.3Q351.6 154.6 343.9 152.3Q351.6 150.0 353.9 142.3Z" fill="#fff" stroke="#fff" stroke-width="2.1" stroke-linejoin="round"/><path d="M84 183L137.8 129.6Q158 111 168.1 108.2L236 101.4L262 140L272 183Z" fill="#fdd1a4"/><g transform="translate(223.3 51) rotate(-15.5)"><rect x="0" y="0" width="144.5" height="85.6" rx="3.5" fill="#acefb5"/><rect x="0" y="14.9" width="144.5" height="14.2" fill="#000"/><circle cx="123.7" cy="65.3" r="9.6" fill="#ffe9e4"/><rect x="10" y="57" width="38" height="7" rx="3.5" fill="#ffe9e4"/><rect x="27" y="70.3" width="6" height="4" rx="2" fill="#ffe9e4"/></g><path d="M177 151.4Q205 138 229.4 119.2Q243 109 252.7 107.5Q262 107 267 113Q272.5 120 272.3 128.5L281.7 140.7Q288 149 291 156.5Q294.5 164 292 169Q289 173.5 281 174Q276 174 272.3 172.4L274.2 183H150Z" fill="#fdd1a4"/><path fill="none" stroke="#4a3226" stroke-width="1.1" stroke-linecap="round" stroke-linejoin="round" d="M177.1 151.4Q205 138 229.4 119.2Q243 109 252.7 107.5Q262 107 267 113Q272.5 120 272.3 128.5L281.7 140.7Q288 149 291 156.5Q294.5 164 292 169Q289 173.5 281 174Q276 174 272.3 172.4"/><path fill="none" stroke="#4a3226" stroke-width="1.1" stroke-linecap="round" stroke-linejoin="round" d="M271.9 129.5L251.3 146.7L228.4 161.7L216.3 169.6Q211 175 207 182.5M251.3 146.7Q260 161 272.3 172.4M228.4 161.7L246.2 180.8L256.9 175.7M215.4 170.5L223.8 182.5M281.7 142.5Q276.5 152 281 158Q285.5 163.5 292.9 164.9"/><rect x="-15" y="-9" width="30" height="18" rx="9" fill="none" stroke="#4a3226" stroke-width="1.1" transform="translate(256.4 123.9) rotate(-33)"/></svg></div>
<div class="dot" style="left:457.0px;top:1196.7px;width:16.8px;height:16.8px;background:#2fc47c"></div>
<svg class="abs" style="left:458.5px;top:1242.4px" width="26.5" height="26" viewBox="0 0 26.5 26" ><path d="M11.8 0.2C16 -0.4 19.5 1.2 23.6 1.6L20.8 4.2L26.4 5.1L22.3 8.6C23.6 11 23.8 14 23.4 16.5C22.5 22 17.8 25.8 12 25.8C5.5 25.8 0.6 21 0.2 14.5C-0.2 7 4.5 1.2 11.8 0.2Z" fill="#6492ab"/><path d="M3.6 15.2C3.8 13.2 5 11.7 7 11.5C9.8 11.3 14.5 11.5 17 11.6C19 11.7 20.1 13.3 20.1 15.2C20 19.4 16.4 22.6 12 22.6C7.4 22.6 3.3 19.4 3.6 15.2Z" fill="#fff"/><ellipse cx="8.6" cy="15.2" rx="1.6" ry="2.2" fill="#6492ab"/><ellipse cx="15.3" cy="15.2" rx="1.6" ry="2.2" fill="#6492ab"/></svg>

<svg class="abs" style="left:559.7px;top:1243.1px" width="27" height="25" viewBox="0 0 27 25" ><path d="M13.4 1.6L1.6 8.4L13.4 15.2L25 8.4Z" fill="none" stroke="#6492ab" stroke-width="3.1" stroke-linejoin="round"/><path d="M6 11.8V16.6C6 20.6 9.3 23.2 13.4 23.2C17.5 23.2 20.8 20.6 20.8 16.6V11.8" fill="none" stroke="#6492ab" stroke-width="3.1"/><path d="M25 8.6V14.4" fill="none" stroke="#6492ab" stroke-width="3.1" stroke-linecap="round"/></svg>

<div class="card" style="left:974.4px;top:921.3px;height:400.0px"><svg class="il" viewBox="0 0 530.5 182.5" width="530.5" height="182.5" preserveAspectRatio="none"><rect width="530.5" height="182.5" fill="#b1d5f0"/><ellipse cx="108.2" cy="1.3" rx="77.7" ry="68.7" transform="rotate(56.6 108.2 1.3)" fill="none" stroke="#15151c" stroke-width="1.9" stroke-linecap="round"/><path fill="none" stroke="#15151c" stroke-width="1.9" stroke-linecap="round" d="M100.5 -4C100.7 -3.3 100.7 -3.8 101.7 0C102.7 3.8 105.6 12.3 106.5 19C107.4 25.7 107.8 32.7 107.3 40.1C106.8 47.5 105 57.6 103.8 63.3C102.6 69 102 69.4 100.2 74.3C98.4 79.2 96.2 86.9 92.8 92.8C89.4 98.7 85.7 104.3 80.1 109.6C74.5 114.9 66.2 120.9 59 124.4C51.8 127.9 44.1 129.4 36.9 130.7C29.7 132 21.9 132.3 15.8 132.3C9.7 132.3 3.5 131.1 0 130.7C-3.5 130.3 -4.2 130.1 -5 130"/><circle cx="116.4" cy="242.9" r="91.8" fill="none" stroke="#15151c" stroke-width="1.9" stroke-linecap="round"/><circle cx="480.2" cy="-73.3" r="99.1" fill="none" stroke="#15151c" stroke-width="1.9" stroke-linecap="round"/><path fill="none" stroke="#15151c" stroke-width="1.9" stroke-linecap="round" d="M534 152.5C533.3 152.8 534.2 152.8 529.9 154.4C525.6 156 515.2 160.3 508 162C500.8 163.7 493.3 164.5 486.5 164.7C479.7 164.9 473.2 164 467 163C460.8 162 455.8 161.3 449.3 158.5C442.8 155.7 434.4 150.6 428 146C421.6 141.4 415.4 135.7 410.7 130.9C406 126.1 403 121.6 400 117C397 112.4 394.2 107.9 392.8 103.4C391.4 98.9 391.1 93.9 391.5 90C391.9 86.1 393.4 82.7 395.5 79.9C397.6 77.1 400.8 74.5 404 73C407.2 71.5 411 70.2 414.8 71C418.6 71.8 423.1 74.4 427 77.5C430.9 80.6 435.2 85.3 438.3 89.6C441.4 93.8 443.4 98.4 445.5 103C447.6 107.6 449.6 110.1 450.7 117.1C451.8 124 452.6 136.6 452.1 144.7C451.6 152.8 450.3 159 447.9 165.4C445.5 171.8 439.6 179.6 437.6 183C435.6 186.4 436.3 185.5 436 186"/><path d="M118.1 104.3Q120.8 113.1 129.6 115.8Q120.8 118.5 118.1 127.3Q115.4 118.5 106.6 115.8Q115.4 113.1 118.1 104.3Z" fill="#fff" stroke="#fff" stroke-width="2.4" stroke-linejoin="round"/><path d="M381.5 21.9Q385.3 34.1 397.5 37.9Q385.3 41.7 381.5 53.9Q377.7 41.7 365.5 37.9Q377.7 34.1 381.5 21.9Z" fill="#fff" stroke="#fff" stroke-width="3.2" stroke-linejoin="round"/><path d="M497.8 78.1Q500.5 86.9 509.3 89.6Q500.5 92.3 497.8 101.1Q495.1 92.3 486.3 89.6Q495.1 86.9 497.8 78.1Z" fill="#fff" stroke="#fff" stroke-width="2.4" stroke-linejoin="round"/><path d="M268.8 150.8Q271.6 159.8 280.6 162.6Q271.6 165.4 268.8 174.4Q266.0 165.4 257.0 162.6Q266.0 159.8 268.8 150.8Z" fill="#fff" stroke="#fff" stroke-width="2.5" stroke-linejoin="round"/><path d="M167.4 86.8L204 26.2Q213 13.8 228.8 13.8C245 13.8 257.2 21 257.7 35L255.6 62L252.9 86.8L250.1 117H160Z" fill="#0eb1b3"/><path d="M366.7 86.8L330.1 26.2Q321.1 13.8 305.3 13.8C289.1 13.8 276.9 21 276.4 35L278.5 62L281.2 86.8L284 117H374Z" fill="#0eb1b3"/><path d="M252 66Q267 52 282 66L281 84Q267 79 253 84Z" fill="#0eb1b3"/><path d="M180.5 65.9Q206.7 57 234.3 71.7Q246 79 252.9 86.8" fill="none" stroke="#bfe6f0" stroke-width="1.2"/><path d="M353.6 65.9Q327.4 57 299.8 71.7Q288.1 79 281.2 86.8" fill="none" stroke="#bfe6f0" stroke-width="1.2"/><circle cx="203.3" cy="117.1" r="46.2" fill="#a9fdec"/><path d="M166.8 119.2Q185.3 93 203.3 95.1Q221.3 93 239.8 119.2Q221.3 143 203.3 142Q185.3 143 166.8 119.2Z" fill="#fff"/><circle cx="203.7" cy="118.5" r="14.2" fill="#000"/><circle cx="330.8" cy="117.1" r="46.2" fill="#a9fdec"/><path d="M294.3 119.2Q312.8 93 330.8 95.1Q348.8 93 367.3 119.2Q348.8 143 330.8 142Q312.8 143 294.3 119.2Z" fill="#fff"/><circle cx="331.2" cy="118.5" r="14.2" fill="#000"/></svg></div>
<div class="dot" style="left:1007.4px;top:1196.7px;width:16.8px;height:16.8px;background:#2fc47c"></div>
<svg class="abs" style="left:1008.9px;top:1242.4px" width="26.5" height="26" viewBox="0 0 26.5 26" ><path d="M11.8 0.2C16 -0.4 19.5 1.2 23.6 1.6L20.8 4.2L26.4 5.1L22.3 8.6C23.6 11 23.8 14 23.4 16.5C22.5 22 17.8 25.8 12 25.8C5.5 25.8 0.6 21 0.2 14.5C-0.2 7 4.5 1.2 11.8 0.2Z" fill="#6492ab"/><path d="M3.6 15.2C3.8 13.2 5 11.7 7 11.5C9.8 11.3 14.5 11.5 17 11.6C19 11.7 20.1 13.3 20.1 15.2C20 19.4 16.4 22.6 12 22.6C7.4 22.6 3.3 19.4 3.6 15.2Z" fill="#fff"/><ellipse cx="8.6" cy="15.2" rx="1.6" ry="2.2" fill="#6492ab"/><ellipse cx="15.3" cy="15.2" rx="1.6" ry="2.2" fill="#6492ab"/></svg>

<svg class="abs" style="left:1110.1px;top:1243.1px" width="27" height="25" viewBox="0 0 27 25" ><path d="M13.4 1.6L1.6 8.4L13.4 15.2L25 8.4Z" fill="none" stroke="#6492ab" stroke-width="3.1" stroke-linejoin="round"/><path d="M6 11.8V16.6C6 20.6 9.3 23.2 13.4 23.2C17.5 23.2 20.8 20.6 20.8 16.6V11.8" fill="none" stroke="#6492ab" stroke-width="3.1"/><path d="M25 8.6V14.4" fill="none" stroke="#6492ab" stroke-width="3.1" stroke-linecap="round"/></svg>

<div class="card" style="left:1525.0px;top:921.3px;height:400.0px"><svg class="il" viewBox="0 0 530.5 182.5" width="530.5" height="182.5" preserveAspectRatio="none"><rect width="530.5" height="182.5" fill="#8785fe"/><polygon points="143.3,31.4 83.4,44.2 128.9,85.2 70.6,66.4 89.5,124.7 48.4,79.2 35.6,139.1 22.8,79.2 -18.2,124.7 0.6,66.4 -57.7,85.2 -12.2,44.2 -72.1,31.4 -12.2,18.6 -57.7,-22.5 0.6,-3.6 -18.3,-61.9 22.8,-16.4 35.6,-76.3 48.4,-16.4 89.5,-61.9 70.6,-3.6 128.9,-22.5 83.4,18.6" fill="#d6c1fc"/><polygon points="514.7,184.0 469.8,194.5 503.4,226.0 459.3,212.6 472.7,256.7 441.2,223.1 430.7,268.0 420.2,223.1 388.7,256.7 402.1,212.6 358.0,226.0 391.6,194.5 346.7,184.0 391.6,173.5 358.0,142.0 402.1,155.4 388.7,111.3 420.2,144.9 430.7,100.0 441.2,144.9 472.7,111.3 459.3,155.4 503.4,142.0 469.8,173.5" fill="#d6c1fc"/><circle cx="74.4" cy="205.5" r="47.1" fill="none" stroke="#120b2e" stroke-width="1.9" stroke-linecap="round"/><circle cx="142.3" cy="221.6" r="54.8" fill="none" stroke="#120b2e" stroke-width="1.9" stroke-linecap="round"/><path fill="none" stroke="#120b2e" stroke-width="1.9" stroke-linecap="round" d="M385 -3C385 -2.5 384.8 -2.3 385.2 0C385.6 2.3 385.8 7.5 387.3 11C388.8 14.5 391.2 18 394 21C396.8 24 398.7 26.5 403.8 28.9C408.9 31.3 417.6 35.2 424.5 35.6C431.4 36 439.7 33.3 445.2 31C450.7 28.7 455.3 24.3 457.6 22C459.9 19.7 459.1 18.4 459 17C458.9 15.6 458.5 14.7 456.9 13.8C455.3 12.9 451.9 11.5 449.3 11.7C446.7 11.9 443.8 13.5 441.5 15C439.2 16.5 437.6 17.2 435.5 20.7C433.4 24.2 429.5 30.1 428.6 35.8C427.7 41.5 428.8 50.2 430 55.1C431.2 60 433.5 62 436 65C438.5 68 441.5 70.6 445.2 73C448.9 75.4 453.6 78 458 79.5C462.4 81 465.4 82.6 471.3 82C477.2 81.4 487.2 79.4 493.4 75.8C499.6 72.2 505.7 65.2 508.6 60.6C511.5 56 510.7 51.1 510.6 48.2C510.5 45.3 509.3 44.1 508 43C506.7 41.9 504.8 41 503 41.3C501.2 41.6 498.8 43.4 497 45C495.2 46.6 493.9 47 492 51C490.1 55 486.5 62.2 485.8 68.9C485.1 75.6 486.5 85.5 487.9 91C489.3 96.5 491.5 98.6 494 102C496.5 105.4 499.3 108.8 503 111.6C506.7 114.3 511.5 116.8 516 118.5C520.5 120.2 526.9 121.3 529.9 122C532.9 122.7 533.3 122.4 534 122.5"/><path d="M186.3 84.9Q189.7 95.8 200.6 99.2Q189.7 102.6 186.3 113.5Q182.9 102.6 172.0 99.2Q182.9 95.8 186.3 84.9Z" fill="#fff" stroke="#fff" stroke-width="3.0" stroke-linejoin="round"/><path d="M358.0 24.7Q360.6 33.0 368.9 35.6Q360.6 38.2 358.0 46.5Q355.4 38.2 347.1 35.6Q355.4 33.0 358.0 24.7Z" fill="#fff" stroke="#fff" stroke-width="2.3" stroke-linejoin="round"/><rect x="207.1" y="22.3" width="115.7" height="10.8" fill="#57eaf5"/><rect x="207.1" y="157.4" width="115.7" height="11" fill="#57eaf5"/><path d="M217 33.1H311.5V38.5L217 40.5Z" fill="#000"/><rect x="213.6" y="152.7" width="101.3" height="4.8" fill="#000"/><path d="M217 40.3L311.5 38.3Q312.5 52 312.2 62Q311.5 72 303 77.5L286.7 85.4Q275 90 275 96.5Q275 103 286.7 107.5L303 114Q312 119 314.2 130.9L314.9 153H213.6L216.4 124Q218 116 226 113L248.1 104.7Q254.3 101.5 254.3 96.5Q254.3 91.5 248.1 88.2L226 78.6Q218.5 74 217.8 66.2Z" fill="#fff"/><path d="M226 66Q232 59 244 63Q256 68 262 62Q272 58 284 63Q292 66.5 302.5 64.5Q290 72 281 84Q273 94 268 96Q262 96 256 86Q245 72 226 66Z" fill="#e6bff6"/><circle cx="265" cy="103.0" r="2.6" fill="#e6bff6"/><circle cx="265" cy="115.5" r="2.6" fill="#e6bff6"/><circle cx="265" cy="128.0" r="2.6" fill="#e6bff6"/></svg></div>
<div class="dot" style="left:1558.0px;top:1196.7px;width:16.8px;height:16.8px;background:#2fc47c"></div>
<svg class="abs" style="left:1559.5px;top:1242.4px" width="26.5" height="26" viewBox="0 0 26.5 26" ><path d="M11.8 0.2C16 -0.4 19.5 1.2 23.6 1.6L20.8 4.2L26.4 5.1L22.3 8.6C23.6 11 23.8 14 23.4 16.5C22.5 22 17.8 25.8 12 25.8C5.5 25.8 0.6 21 0.2 14.5C-0.2 7 4.5 1.2 11.8 0.2Z" fill="#6492ab"/><path d="M3.6 15.2C3.8 13.2 5 11.7 7 11.5C9.8 11.3 14.5 11.5 17 11.6C19 11.7 20.1 13.3 20.1 15.2C20 19.4 16.4 22.6 12 22.6C7.4 22.6 3.3 19.4 3.6 15.2Z" fill="#fff"/><ellipse cx="8.6" cy="15.2" rx="1.6" ry="2.2" fill="#6492ab"/><ellipse cx="15.3" cy="15.2" rx="1.6" ry="2.2" fill="#6492ab"/></svg>

<svg class="abs" style="left:1660.7px;top:1243.1px" width="27" height="25" viewBox="0 0 27 25" ><path d="M13.4 1.6L1.6 8.4L13.4 15.2L25 8.4Z" fill="none" stroke="#6492ab" stroke-width="3.1" stroke-linejoin="round"/><path d="M6 11.8V16.6C6 20.6 9.3 23.2 13.4 23.2C17.5 23.2 20.8 20.6 20.8 16.6V11.8" fill="none" stroke="#6492ab" stroke-width="3.1"/><path d="M25 8.6V14.4" fill="none" stroke="#6492ab" stroke-width="3.1" stroke-linecap="round"/></svg>
<span id="n0" class="t" style="left:177.0px;top:68.5px;font-size:24px;font-weight:700;color:#f3f6f7;transform:scaleX(1.0416);">Розсилки</span>
<span id="n1" class="t" style="left:344.2px;top:68.5px;font-size:24px;font-weight:700;color:#f3f6f7;transform:scaleX(1.0202);">Automation</span>
<span id="n2" class="t" style="left:528.6px;top:68.5px;font-size:24px;font-weight:700;color:#f3f6f7;transform:scaleX(1.0728);">Чат-боти</span>
<span id="n3" class="t" style="left:691.2px;top:68.5px;font-size:24px;font-weight:700;color:#f3f6f7;transform:scaleX(1.0359);">CRM</span>
<span id="n4" class="t" style="left:797.2px;top:68.5px;font-size:24px;font-weight:700;color:#f3f6f7;transform:scaleX(1.0245);">Сайти</span>
<span id="n5" class="t" style="left:921.2px;top:68.5px;font-size:24px;font-weight:700;color:#f3f6f7;transform:scaleX(1.0248);">Попапи</span>
<span id="n6" class="t" style="left:1061.8px;top:68.5px;font-size:24px;font-weight:700;color:#f3f6f7;transform:scaleX(1.0026);">Push</span>
<span id="n7" class="t" style="left:1170.0px;top:68.5px;font-size:24px;font-weight:700;color:#f3f6f7;transform:scaleX(1.0351);">SMTP</span>
<span id="n8" class="t" style="left:1288.4px;top:68.5px;font-size:24px;font-weight:700;color:#f3f6f7;transform:scaleX(1.0034);">EDU</span>
<span id="sms" class="t" style="left:1709.8px;top:68.3px;font-size:24px;font-weight:400;color:#c5cfd5;transform:scaleX(1.0448);">Надіслати SMS</span>
<span id="s0" class="t" style="left:127.0px;top:188.6px;font-size:24px;font-weight:400;color:#0b3a52;transform:scaleX(1.0506);">Головна</span>
<span id="s1" class="t" style="left:126.0px;top:267.8px;font-size:24px;font-weight:400;color:#0b3a52;transform:scaleX(1.1373);">Курси</span>
<span id="s2" class="t" style="left:127.0px;top:347.4px;font-size:24px;font-weight:400;color:#0b3a52;transform:scaleX(1.0683);">Відповіді до</span>
<span id="s3" class="t" style="left:128.0px;top:374.5px;font-size:24px;font-weight:400;color:#0b3a52;transform:scaleX(1.0428);">завдань</span>
<span id="s4" class="t" style="left:128.0px;top:451.7px;font-size:24px;font-weight:400;color:#0b3a52;transform:scaleX(1.0627);">Запитання</span>
<span id="s5" class="t" style="left:127.0px;top:528.9px;font-size:24px;font-weight:400;color:#0b3a52;transform:scaleX(1.0679);">Статистика</span>
<span id="s6" class="t" style="left:127.0px;top:606.2px;font-size:24px;font-weight:400;color:#0b3a52;transform:scaleX(1.0753);">Push-повідомлення</span>
<span id="s7" class="t" style="left:127.0px;top:683.2px;font-size:24px;font-weight:400;color:#0b3a52;transform:scaleX(1.1014);">Промокоди</span>
<span id="s8" class="t" style="left:127.0px;top:759.7px;font-size:24px;font-weight:400;color:#0b3a52;transform:scaleX(1.0636);">Сертифікати</span>
<span id="s9" class="t" style="left:127.0px;top:837.6px;font-size:24px;font-weight:400;color:#0b3a52;transform:scaleX(1.0581);">Менеджер файлів</span>
<span id="s10" class="t" style="left:128.0px;top:914.1px;font-size:24px;font-weight:400;color:#0b3a52;transform:scaleX(1.0159);">Тарифи</span>
<span id="bonus" class="t" style="left:140.8px;top:1015.7px;font-size:24px;font-weight:700;color:#0b3147;transform:scaleX(1.0305);">Отримати бонус</span>
<span id="h1" class="t" style="left:425.0px;top:185.4px;font-size:60.5px;font-weight:700;color:#0a0a0a;transform:scaleX(1.0619);">Курси</span>
<span id="btn" class="t" style="left:483.6px;top:299.0px;font-size:24.5px;font-weight:700;color:#ffffff;transform:scaleX(1.0144);">Створити курс</span>
<span id="t1" class="t" style="left:443.8px;top:388.1px;font-size:23.5px;font-weight:400;color:#16405a;transform:scaleX(1.0678);">Усі курси</span>
<span id="t1n" class="t" style="left:554.6px;top:388.1px;font-size:23.5px;font-weight:700;color:#16405a;transform:scaleX(1.0884);">6</span>
<span id="t2" class="t" style="left:631.2px;top:388.1px;font-size:23.5px;font-weight:400;color:#16405a;transform:scaleX(1.0423);">Активні</span>
<span id="t2n" class="t" style="left:723.6px;top:388.1px;font-size:23.5px;font-weight:700;color:#16405a;transform:scaleX(0.9940);">6</span>
<span id="t3" class="t" style="left:798.6px;top:388.1px;font-size:23.5px;font-weight:400;color:#7d8f99;transform:scaleX(1.0446);">Неактивні</span>
<span id="t3n" class="t" style="left:919.2px;top:388.1px;font-size:23.5px;font-weight:700;color:#7d8f99;transform:scaleX(1.1687);">0</span>
<span id="t4" class="t" style="left:997.0px;top:388.1px;font-size:23.5px;font-weight:400;color:#5d7482;transform:scaleX(1.0139);">Заплановані</span>
<span id="t4n" class="t" style="left:1143.8px;top:388.1px;font-size:23.5px;font-weight:700;color:#5d7482;transform:scaleX(1.0883);">0</span>
<span id="acad" class="t" style="left:477.0px;top:460.6px;font-size:28px;font-weight:700;color:#2c363d;transform:scaleX(1.0055);">your.academy</span>
<span id="dom" class="t" style="left:1637.6px;top:388.4px;font-size:21px;font-weight:400;color:#49545b;transform:scaleX(1.0003);">Домени</span>
<span id="sel" class="t" style="left:1748.8px;top:388.4px;font-size:21px;font-weight:400;color:#2a3237;transform:scaleX(0.9896);">Усі домени</span>
<span id="lnk" class="t" style="left:1610.6px;top:463.9px;font-size:24px;font-weight:400;color:#0f9ec3;transform:scaleX(1.0644);">Налаштування кабінету студента</span>
<span id="new" class="t" style="left:2016.8px;top:460.4px;font-size:16.4px;font-weight:700;color:#ee4d3c;transform:scaleX(1.0251);">NEW</span>
<span id="c0t" class="t" style="left:457.0px;top:741.0px;font-size:30px;font-weight:400;color:#5c6f78;transform:scaleX(1.0722);">Основи email маркетингу</span>
<span id="c0s" class="t" style="left:482.2px;top:791.3px;font-size:23.5px;font-weight:400;color:#67787f;transform:scaleX(1.0822);">Курс почався</span>
<span id="c0a" class="t" style="left:497.2px;top:839.6px;font-size:24.5px;font-weight:400;color:#566973;transform:scaleX(0.9981);-webkit-text-stroke:0.7px #566973;">25</span>
<span id="c0b" class="t" style="left:597.0px;top:839.6px;font-size:24.5px;font-weight:400;color:#566973;transform:scaleX(0.8963);-webkit-text-stroke:0.7px #566973;">3</span>
<span id="c1t" class="t" style="left:1006.6px;top:741.0px;font-size:30px;font-weight:400;color:#5c6f78;transform:scaleX(1.0846);">Корпоративні фінанси</span>
<span id="c1s" class="t" style="left:1032.8px;top:791.3px;font-size:23.5px;font-weight:400;color:#67787f;transform:scaleX(1.0822);">Курс почався</span>
<span id="c1a" class="t" style="left:1046.8px;top:839.6px;font-size:24.5px;font-weight:400;color:#566973;transform:scaleX(0.9980);-webkit-text-stroke:0.7px #566973;">38</span>
<span id="c1b" class="t" style="left:1147.6px;top:839.6px;font-size:24.5px;font-weight:400;color:#566973;transform:scaleX(0.8963);-webkit-text-stroke:0.7px #566973;">5</span>
<span id="c2t" class="t" style="left:1557.0px;top:741.0px;font-size:30px;font-weight:400;color:#5c6f78;transform:scaleX(1.0982);">Курс з копірайтингу</span>
<span id="c2s" class="t" style="left:1583.2px;top:791.3px;font-size:23.5px;font-weight:400;color:#67787f;transform:scaleX(1.0822);">Курс почався</span>
<span id="c2a" class="t" style="left:1598.2px;top:839.6px;font-size:24.5px;font-weight:400;color:#566973;transform:scaleX(0.9981);-webkit-text-stroke:0.7px #566973;">40</span>
<span id="c2b" class="t" style="left:1698.0px;top:839.6px;font-size:24.5px;font-weight:400;color:#566973;transform:scaleX(0.8963);-webkit-text-stroke:0.7px #566973;">9</span>
<span id="c3t" class="t" style="left:456.0px;top:1144.0px;font-size:30px;font-weight:400;color:#5c6f78;transform:scaleX(1.0737);">Практичний майстер-клас з п...</span>
<span id="c3s" class="t" style="left:482.2px;top:1194.3px;font-size:23.5px;font-weight:400;color:#67787f;transform:scaleX(1.0822);">Курс почався</span>
<span id="c3a" class="t" style="left:497.2px;top:1242.6px;font-size:24.5px;font-weight:400;color:#566973;transform:scaleX(0.9980);-webkit-text-stroke:0.7px #566973;">28</span>
<span id="c3b" class="t" style="left:597.0px;top:1242.6px;font-size:24.5px;font-weight:400;color:#566973;transform:scaleX(0.8963);-webkit-text-stroke:0.7px #566973;">8</span>
<span id="c4t" class="t" style="left:1006.6px;top:1144.0px;font-size:30px;font-weight:400;color:#5c6f78;transform:scaleX(1.0820);">Вступ до веб-аналітики</span>
<span id="c4s" class="t" style="left:1032.8px;top:1194.3px;font-size:23.5px;font-weight:400;color:#67787f;transform:scaleX(1.0822);">Курс почався</span>
<span id="c4a" class="t" style="left:1045.8px;top:1242.6px;font-size:24.5px;font-weight:400;color:#566973;transform:scaleX(1.0365);-webkit-text-stroke:0.7px #566973;">16</span>
<span id="c4b" class="t" style="left:1147.6px;top:1242.6px;font-size:24.5px;font-weight:400;color:#566973;transform:scaleX(0.8963);-webkit-text-stroke:0.7px #566973;">6</span>
<span id="c5t" class="t" style="left:1557.0px;top:1144.0px;font-size:30px;font-weight:400;color:#5c6f78;transform:scaleX(1.0753);">Керування бізнесом</span>
<span id="c5s" class="t" style="left:1583.2px;top:1194.3px;font-size:23.5px;font-weight:400;color:#67787f;transform:scaleX(1.0822);">Курс почався</span>
<span id="c5a" class="t" style="left:1598.2px;top:1242.6px;font-size:24.5px;font-weight:400;color:#566973;transform:scaleX(0.9980);-webkit-text-stroke:0.7px #566973;">22</span>
<span id="c5b" class="t" style="left:1698.0px;top:1242.6px;font-size:24.5px;font-weight:400;color:#566973;transform:scaleX(0.8963);-webkit-text-stroke:0.7px #566973;">3</span>
</div></div></body></html>
